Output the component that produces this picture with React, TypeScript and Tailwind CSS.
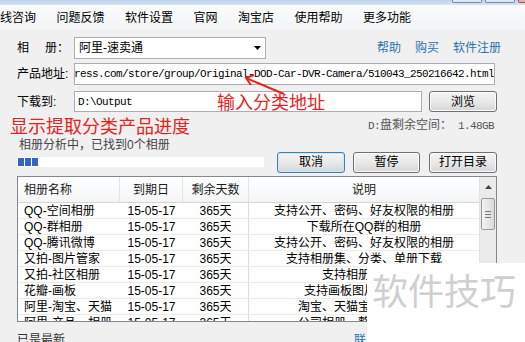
import React from "react";

const rows: [string, string][] = [
  ["QQ-空间相册", "支持公开、密码、好友权限的相册"],
  ["QQ-群相册", "下载所在QQ群的相册"],
  ["QQ-腾讯微博", "支持公开、密码、好友权限的相册"],
  ["又拍-图片管家", "支持相册集、分类、单册下载"],
  ["又拍-社区相册", "支持相册集下载"],
  ["花瓣-画板", "支持画板图片批量下载"],
  ["阿里-淘宝、天猫", "淘宝、天猫宝贝图片下载"],
  ["阿里-产品、相册", "公司相册、整站产品下载"],
];

const menus = ["在线咨询", "问题反馈", "软件设置", "官网", "淘宝店", "使用帮助", "更多功能"];

function Btn({ children, focused, w }: { children: React.ReactNode; focused?: boolean; w: string }) {
  return (
    <div
      className={
        "flex h-[21px] items-center justify-center rounded-[3px] border text-[12px] text-black bg-linear-to-b from-[#f4f4f4] via-[#e9e9e9] to-[#d6d6d6] " +
        w +
        (focused ? " border-[#3c7fb1] shadow-[inset_0_0_0_1px_#cbe8f8]" : " border-[#707070] shadow-[inset_0_0_0_1px_#fbfbfb]")
      }
    >
      {children}
    </div>
  );
}

export default function App() {
  return (
    <div className="relative w-[525px] h-[342px] overflow-hidden bg-[#f0f0f0] text-[12px] leading-[14px] text-black font-['Liberation_Sans','Noto_Sans_CJK_SC',sans-serif]">
      {/* title strip */}
      <div className="h-[5px] bg-linear-to-b from-[#bcd2ea] to-[#d6e5f4]" />
      <div className="absolute left-[452px] top-0 h-[3px] w-[30px] rounded-b-[2px] border-x border-b border-[#7a8aa3] bg-[#dce7f3]" />
      <div className="absolute left-[485px] top-0 h-[3px] w-[30px] rounded-b-[2px] border-x border-b border-[#7a8aa3] bg-[#dce7f3]" />
      <div className="absolute left-[518px] top-0 h-[3px] w-[20px] rounded-b-[2px] border-x border-b border-[#a55247] bg-[#e3b3a9]" />

      {/* menu bar */}
      <div className="h-[25px] bg-linear-to-b from-[#fbfbfc] to-[#f2f4f6] overflow-hidden">
        <div className="ml-[-12px] flex h-full items-center gap-[20.5px] whitespace-nowrap">
          {menus.map((m) => (
            <span key={m}>{m}</span>
          ))}
        </div>
      </div>

      <div className="pl-[17px]">
        {/* album row */}
        <div className="mt-[7px] flex h-[22px] items-center whitespace-nowrap">
          <div className="flex w-[57px]">
            <span>相</span>
            <span className="ml-[16px]">册</span>
            <span>：</span>
          </div>
          <div className="relative flex h-[22px] w-[192px] items-center border border-[#abadb3] bg-white pl-[4px]">
            阿里-速卖通
            <svg className="absolute right-[4px] top-[8px]" width="7" height="4" viewBox="0 0 7 4">
              <polygon points="0,0 7,0 3.5,4" fill="#000" />
            </svg>
          </div>
          <span className="ml-[111px] text-[#2672b5]">帮助</span>
          <span className="ml-[14px] text-[#2672b5]">购买</span>
          <span className="ml-[14px] text-[#2672b5]">软件注册</span>
        </div>

        {/* url row */}
        <div className="mt-[4px] flex h-[22px] items-center">
          <div className="w-[57px]">产品地址:</div>
          <div className="flex h-[22px] w-[421px] items-center justify-end overflow-hidden border border-[#abadb3] bg-white pr-[0px] whitespace-nowrap font-['Liberation_Mono',monospace] text-[11px] tracking-[-0.6px]">
            aliexpress.com/store/group/Original-DOD-Car-DVR-Camera/510043_250216642.html
          </div>
        </div>

        {/* download row */}
        <div className="mt-[6px] flex h-[21px] items-center">
          <div className="w-[57px]">下载到:</div>
          <div className="flex h-[21px] w-[348px] items-center border border-[#abadb3] bg-white pl-[3px] font-['Liberation_Mono',monospace] text-[11px] tracking-[-0.6px]">
            D:\Output
          </div>
          <div className="ml-[7px]">
            <Btn w="w-[68px]">浏览</Btn>
          </div>
        </div>

        {/* progress title row */}
        <div className="mt-[5px] flex h-[20px] w-[477px] items-center justify-between">
          <span className="ml-[-7px] text-[18px] leading-[20px] text-[#e5231d]">显示提取分类产品进度</span>
          <span className="mb-[3px] text-[#555]">
            <span className="font-['Liberation_Mono',monospace] text-[11px] tracking-[-0.6px]">D:</span>
            盘剩余空间：
            <span className="font-['Liberation_Mono',monospace] text-[11px] tracking-[-0.6px]"> 1.48GB</span>
          </span>
        </div>

        <div className="flex h-[15px] items-center pl-[2px] text-[#444]">相册分析中，已找到0个相册</div>

        {/* progress + buttons */}
        <div className="flex h-[20px] items-center">
          <div className="flex h-[10px] w-[247px] gap-[1px] bg-white p-[1px]">
            <div className="h-full w-[6px] bg-[#3167c2]" />
            <div className="h-full w-[6px] bg-[#3167c2]" />
            <div className="h-full w-[6px] bg-[#3167c2]" />
          </div>
          <div className="ml-[13px]">
            <Btn w="w-[68px]" focused>
              取消
            </Btn>
          </div>
          <div className="ml-[8px]">
            <Btn w="w-[67px]">暂停</Btn>
          </div>
          <div className="ml-[9px]">
            <Btn w="w-[68px]">打开目录</Btn>
          </div>
        </div>

        {/* table */}
        <div className="mt-[4px] flex h-[146px] w-[480px] border border-[#828790] bg-white">
          <div className="flex min-w-0 flex-1 flex-col overflow-hidden">
            <div className="flex h-[26px] shrink-0 items-center border-b border-[#d5d5d5] bg-linear-to-b from-white to-[#f4f5f7] text-[#1a1a1a]">
              <div className="flex h-full w-[102px] items-center border-r border-[#e3e3e3] pl-[6px]">相册名称</div>
              <div className="flex h-full w-[63px] items-center justify-center border-r border-[#e3e3e3]">到期日</div>
              <div className="flex h-full w-[66px] items-center justify-center border-r border-[#e3e3e3]">剩余天数</div>
              <div className="flex h-full flex-1 items-center justify-center">说明</div>
            </div>
            {rows.map(([name, desc]) => (
              <div key={name} className="flex h-[16px] shrink-0 items-center border-b border-[#ececec] whitespace-nowrap">
                <div className="w-[102px] pl-[6px]">{name}</div>
                <div className="w-[63px] text-center">15-05-17</div>
                <div className="h-full w-[66px] border-r border-[#dcdcdc] text-center leading-[16px]">365天</div>
                <div className="flex-1 text-center">{desc}</div>
              </div>
            ))}
          </div>
          <div className="flex w-[17px] shrink-0 flex-col bg-[#ebebeb] border-l border-[#e2e2e2]">
            <div className="flex h-[19px] items-center justify-center">
              <svg width="7" height="4" viewBox="0 0 7 4">
                <polygon points="0,4 7,4 3.5,0" fill="#444" />
              </svg>
            </div>
            <div className="mx-[1px] mt-[2px] flex h-[32px] flex-col items-center justify-center gap-[2px] rounded-[2px] border border-[#979797] bg-linear-to-r from-[#f3f3f3] to-[#dadada]">
              <div className="h-[1px] w-[6px] bg-[#7a7a7a]" />
              <div className="h-[1px] w-[6px] bg-[#7a7a7a]" />
              <div className="h-[1px] w-[6px] bg-[#7a7a7a]" />
            </div>
          </div>
        </div>

        {/* status */}
        <div className="mt-[11px] flex h-[14px] items-center whitespace-nowrap">
          <span className="text-[#333]">已是最新</span>
          <span className="ml-[289px] text-[#2672b5]">联系客服</span>
        </div>
      </div>

      {/* annotation */}
      <div className="absolute left-[217px] top-[93px] text-[18px] leading-[20px] text-[#e5231d] whitespace-nowrap">输入分类地址</div>
      <svg className="absolute left-[240px] top-[70px]" width="50" height="30" viewBox="0 0 50 30">
        <line x1="6" y1="8" x2="44" y2="24" stroke="#e5231d" strokeWidth="2" />
        <polyline points="14,5 6,8 11,15" fill="none" stroke="#e5231d" strokeWidth="2" />
      </svg>

      {/* watermark */}
      <div className="absolute left-[367px] top-[263px] right-0 bottom-0 bg-white">
        <div className="absolute left-[5px] top-[12px] text-[36px] leading-none text-[#cfcfcf] whitespace-nowrap">软件技巧</div>
      </div>
    </div>
  );
}
